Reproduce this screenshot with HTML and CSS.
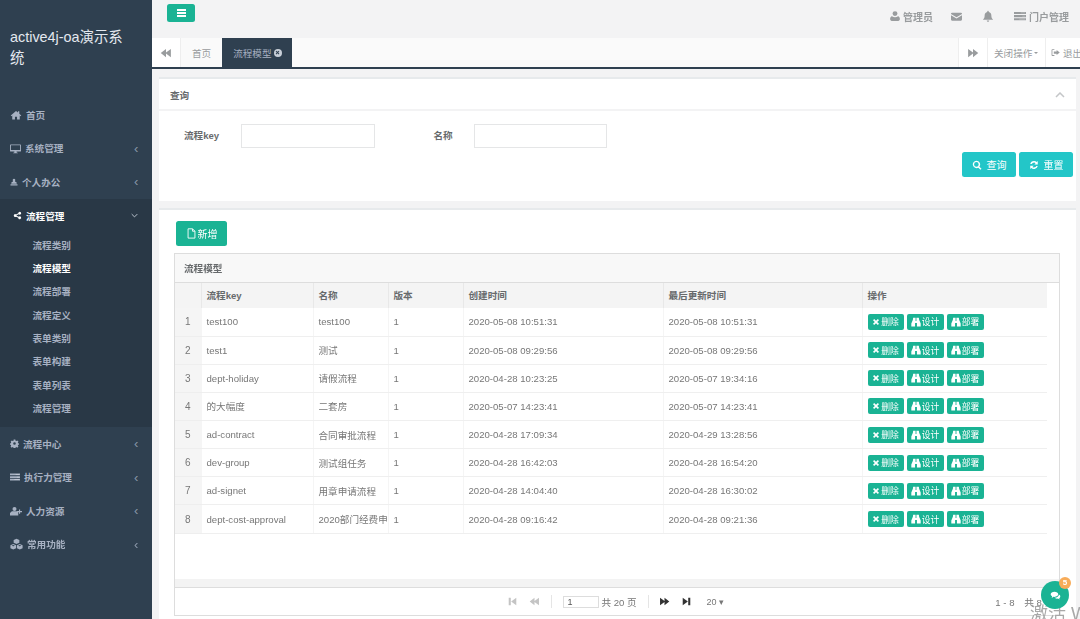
FILE: index.html
```html
<!DOCTYPE html>
<html lang="zh-CN">
<head>
<meta charset="utf-8">
<title>active4j-oa演示系统</title>
<link rel="stylesheet" href="styles.css">
</head>
<body>
<svg class="defs" width="0" height="0" aria-hidden="true">
  <symbol id="i-home" viewBox="0 0 16 16"><path d="M8 2.500 1 8.600l.8.900L3 8.500V14h3.600v-3.600h2.800V14H13V8.500l1.200 1 .8-.9-2.600-2.300V3h-1.800v1.700z"/></symbol>
  <symbol id="i-desktop" viewBox="0 0 16 16"><path fill-rule="evenodd" d="M1 2h14a1 1 0 0 1 1 1v8.500a1 1 0 0 1-1 1H9.500l.5 1.500h1.500v1H4.500v-1H6l.5-1.500H1a1 1 0 0 1-1-1V3a1 1 0 0 1 1-1zm.3 1.300v7h13.400v-7z"/></symbol>
  <symbol id="i-users" viewBox="0 0 16 16"><path d="M8 1.500a2.600 2.600 0 0 1 2 4.300v1.400l3 1.500.5 3H2.500l.5-3 3-1.500V5.800a2.600 2.600 0 0 1 2-4.300zM1 12.500h14V15H1z"/></symbol>
  <symbol id="i-share" viewBox="0 0 16 16"><path d="M12 1.500a2.500 2.500 0 1 1-1.800 4.200L6.400 7.400a2.500 2.500 0 0 1 0 1.200l3.800 1.700a2.500 2.500 0 1 1-.7 1.500L5.400 10a2.500 2.500 0 1 1 0-4l4.100-1.800A2.500 2.500 0 0 1 12 1.500z"/></symbol>
  <symbol id="i-gear" viewBox="0 0 16 16"><path fill-rule="evenodd" d="M6.500 1h3l.4 2 1.300.6 1.800-1.100 2 2-1.100 1.800.6 1.300 2 .4v2l-2 .4-.6 1.300 1.100 1.800-2 2-1.800-1.100-1.300.6-.4 2h-3l-.4-2-1.300-.6-1.800 1.100-2-2 1.100-1.800-.6-1.300-2-.4v-2l2-.4.6-1.300L1.200 4.500l2-2 1.800 1.100 1.300-.6zM8 5.700a2.300 2.300 0 1 0 0 4.600 2.300 2.300 0 0 0 0-4.600z"/></symbol>
  <symbol id="i-tasks" viewBox="0 0 16 16"><path d="M0 2.500h16v2.800H0zM0 6.700h16v2.800H0zM0 10.900h16v2.800H0z"/><path fill="#fff" fill-opacity=".35" d="M9 3.300h6v1.100H9zM11 7.500h4v1.100h-4zM7 11.700h8v1.100H7z"/></symbol>
  <symbol id="i-useradd" viewBox="0 0 16 16"><path d="M6 2.500a2.700 2.700 0 1 1 0 5.400 2.700 2.700 0 0 1 0-5.400zM2.500 8.300h7l1.500 1.700V14H0v-3.500zM12 6h1.500v2H16v1.500h-2.500v2H12v-2H9.500V8H12z"/></symbol>
  <symbol id="i-cubes" viewBox="0 0 16 16"><path fill-rule="evenodd" d="M8 1l3.500 1.500v3.300L8 7.300 4.500 5.800V2.500zM4 7.300l3.500 1.500v3.700L4 14 .5 12.500V8.800zm0 1.300L2 9.400l2 .9 2-.9zM12 7.300l3.500 1.500v3.700L12 14l-3.500-1.500V8.800zm0 1.300l-2 .8 2 .9 2-.9z"/></symbol>
  <symbol id="i-user" viewBox="0 0 16 16"><path d="M8 1.500a3.300 3.300 0 1 1 0 6.600 3.300 3.300 0 0 1 0-6.600zM4 8.200c1 .9 2.500 1.300 4 1.300s3-.4 4-1.300c1.600.3 2.500 1.800 2.500 3.800 0 1.400-.8 2.500-2.200 2.500H3.700C2.300 14.500 1.500 13.400 1.500 12c0-2 .9-3.500 2.500-3.800z"/></symbol>
  <symbol id="i-mail" viewBox="0 0 16 16"><path d="M1.500 2.500h13A1.500 1.500 0 0 1 16 4v.4L8 9.200 0 4.400V4a1.500 1.500 0 0 1 1.500-1.500zM0 6l8 4.800L16 6v6.500a1.500 1.500 0 0 1-1.500 1.500h-13A1.500 1.500 0 0 1 0 12.500z"/></symbol>
  <symbol id="i-bell" viewBox="0 0 16 16"><path d="M8 1a1 1 0 0 1 1 1v.6c2.400.5 3.500 2.400 3.500 4.900 0 2.500.8 3.700 2 4.900v.6h-13v-.6c1.200-1.200 2-2.400 2-4.900 0-2.500 1.100-4.400 3.500-4.900V2a1 1 0 0 1 1-1zM6.300 14h3.400a1.700 1.700 0 0 1-3.400 0z"/></symbol>
  <symbol id="i-back" viewBox="0 0 16 16"><path d="M8 2.500v4.700L14.500 2.500v11L8 8.800v4.700L1 8z"/></symbol>
  <symbol id="i-fwd" viewBox="0 0 16 16"><path d="M8 2.500v4.700L1.500 2.500v11L8 8.800v4.700L15 8z"/></symbol>
  <symbol id="i-first" viewBox="0 0 16 16"><path d="M2.500 2.500h3v11h-3zM13.500 2.500v11L6 8z"/></symbol>
  <symbol id="i-last" viewBox="0 0 16 16"><path d="M13.500 2.500h-3v11h3zM2.500 2.500v11L10 8z"/></symbol>
  <symbol id="i-signout" viewBox="0 0 16 16"><path d="M1 3.500A1.500 1.500 0 0 1 2.500 2H6v1.500H2.500v9H6V14H2.500A1.500 1.500 0 0 1 1 12.500zM10 3.500 15.500 8 10 12.500V10H5V6h5z"/></symbol>
  <symbol id="i-search" viewBox="0 0 16 16"><path fill-rule="evenodd" d="M7 1a6 6 0 0 1 4.800 9.600l3.400 3.400-1.700 1.700-3.400-3.400A6 6 0 1 1 7 1zm0 2.300a3.700 3.700 0 1 0 0 7.400 3.700 3.700 0 0 0 0-7.400z"/></symbol>
  <symbol id="i-refresh" viewBox="0 0 16 16"><path d="M8 1.500c1.700 0 3.200.7 4.300 1.700L14 1.500V7H8.500l2-2A4 4 0 0 0 4.300 6.500H2A6.300 6.300 0 0 1 8 1.500zM2 9h5.500l-2 2a4 4 0 0 0 6.200-1.500H14A6.300 6.300 0 0 1 3.700 12.800L2 14.500z"/></symbol>
  <symbol id="i-file" viewBox="0 0 16 16"><path fill="none" stroke="currentColor" stroke-width="1.300" d="M3 1.200h6.500L13 4.700v10H3zM9.500 1.200v3.500H13"/></symbol>
  <symbol id="i-times" viewBox="0 0 16 16"><path d="M4.300 2 8 5.700 11.700 2 14 4.300 10.300 8l3.700 3.700-2.300 2.300L8 10.300 4.300 14 2 11.700 5.700 8 2 4.300z"/></symbol>
  <symbol id="i-binoc" viewBox="0 0 16 16"><path d="M3.500 1h3.800v5.500h1.400V1h3.800l.5 3.500 2.500 6V15H9.500V9.500h-3V15H.5v-4.500l2.500-6z"/></symbol>
  <symbol id="i-comments" viewBox="0 0 16 16"><path d="M6.500 2.500c3 0 5.500 1.700 5.500 3.800S9.500 10 6.500 10c-.5 0-1 0-1.500-.1L2.500 11.500l.6-2.300C1.800 8.500 1 7.500 1 6.300c0-2.100 2.500-3.800 5.500-3.800z"/><path d="M13 6.500c1.300.7 2 1.700 2 2.800 0 1-.6 1.900-1.600 2.600l.5 2-2.300-1.400c-1.700.3-3.600-.2-4.700-1.400 3.300 0 6-1.800 6.100-4.600z"/></symbol>
</svg>

<div class="app">
  <aside class="sidebar">
    <div class="logo">active4j-oa演示系统</div>
    <nav class="nav">
      <a class="nav-item"><svg class="ic w12"><use href="#i-home"/></svg><span>首页</span></a>
      <a class="nav-item"><svg class="ic w11"><use href="#i-desktop"/></svg><span>系统管理</span><i class="chev">‹</i></a>
      <a class="nav-item"><svg class="ic w8"><use href="#i-users"/></svg><span>个人办公</span><i class="chev">‹</i></a>
      <div class="nav-group">
        <a class="nav-item open"><svg class="ic w9"><use href="#i-share"/></svg><span>流程管理</span><svg class="chev-down" viewBox="0 0 10 6"><path d="M1 1l4 4 4-4" fill="none" stroke="currentColor" stroke-width="1.300"/></svg></a>
        <ul class="sub">
          <li>流程类别</li>
          <li class="cur">流程模型</li>
          <li>流程部署</li>
          <li>流程定义</li>
          <li>表单类别</li>
          <li>表单构建</li>
          <li>表单列表</li>
          <li>流程管理</li>
        </ul>
      </div>
      <a class="nav-item"><svg class="ic w9"><use href="#i-gear"/></svg><span>流程中心</span><i class="chev">‹</i></a>
      <a class="nav-item"><svg class="ic w10"><use href="#i-tasks"/></svg><span>执行力管理</span><i class="chev">‹</i></a>
      <a class="nav-item"><svg class="ic w12"><use href="#i-useradd"/></svg><span>人力资源</span><i class="chev">‹</i></a>
      <a class="nav-item"><svg class="ic w13"><use href="#i-cubes"/></svg><span>常用功能</span><i class="chev">‹</i></a>
    </nav>
  </aside>

  <main class="main">
    <header class="topbar">
      <button class="burger" aria-label="菜单"><b></b><b></b><b></b></button>
      <div class="top-right">
        <span class="top-link"><svg class="ic w12"><use href="#i-user"/></svg>管理员</span>
        <span class="top-link"><svg class="ic w11"><use href="#i-mail"/></svg></span>
        <span class="top-link"><svg class="ic w12"><use href="#i-bell"/></svg></span>
        <span class="top-link portal"><svg class="ic w12"><use href="#i-tasks"/></svg>门户管理</span>
      </div>
    </header>

    <div class="tabs">
      <button class="tab-arrow"><svg class="ic"><use href="#i-back"/></svg></button>
      <span class="tab">首页</span>
      <span class="tab active">流程模型<em class="tab-x"><svg viewBox="0 0 16 16"><use href="#i-times"/></svg></em></span>
      <div class="tabs-fill"></div>
      <button class="tab-arrow fwd"><svg class="ic"><use href="#i-fwd"/></svg></button>
      <span class="tab-act close-ops">关闭操作<i class="caret"></i></span>
      <span class="tab-act logout"><svg class="ic"><use href="#i-signout"/></svg>退出</span>
    </div>

    <div class="content">
      <section class="panel search">
        <div class="panel-head">
          <h5>查询</h5>
          <svg class="collapse" viewBox="0 0 10 6"><path d="M1 5l4-4 4 4" fill="none" stroke="currentColor" stroke-width="1.500"/></svg>
        </div>
        <form class="search-body">
          <div class="fields">
            <label class="lbl key">流程key</label><input class="inp" type="text">
            <label class="lbl name">名称</label><input class="inp" type="text">
          </div>
          <div class="search-actions">
            <button type="button" class="btn-info"><svg class="ic"><use href="#i-search"/></svg>查询</button>
            <button type="button" class="btn-info"><svg class="ic"><use href="#i-refresh"/></svg>重置</button>
          </div>
        </form>
      </section>

      <section class="panel list">
        <button class="btn-add"><svg class="ic"><use href="#i-file"/></svg>新增</button>
        <div class="grid">
          <div class="grid-title">流程模型</div>
          <div class="grid-view">
            <table class="tbl">
              <colgroup><col class="c0"><col class="c1"><col class="c2"><col class="c3"><col class="c4"><col class="c5"><col class="c6"></colgroup>
              <thead>
                <tr><th></th><th>流程key</th><th>名称</th><th>版本</th><th>创建时间</th><th>最后更新时间</th><th>操作</th></tr>
              </thead>
              <tbody>
                <tr><td class="num">1</td><td>test100</td><td>test100</td><td>1</td><td>2020-05-08 10:51:31</td><td>2020-05-08 10:51:31</td><td class="ops"><a class="op"><svg><use href="#i-times"/></svg>删除</a><a class="op"><svg><use href="#i-binoc"/></svg>设计</a><a class="op"><svg><use href="#i-binoc"/></svg>部署</a></td></tr>
                <tr><td class="num">2</td><td>test1</td><td>测试</td><td>1</td><td>2020-05-08 09:29:56</td><td>2020-05-08 09:29:56</td><td class="ops"><a class="op"><svg><use href="#i-times"/></svg>删除</a><a class="op"><svg><use href="#i-binoc"/></svg>设计</a><a class="op"><svg><use href="#i-binoc"/></svg>部署</a></td></tr>
                <tr><td class="num">3</td><td>dept-holiday</td><td>请假流程</td><td>1</td><td>2020-04-28 10:23:25</td><td>2020-05-07 19:34:16</td><td class="ops"><a class="op"><svg><use href="#i-times"/></svg>删除</a><a class="op"><svg><use href="#i-binoc"/></svg>设计</a><a class="op"><svg><use href="#i-binoc"/></svg>部署</a></td></tr>
                <tr><td class="num">4</td><td>的大幅度</td><td>二套房</td><td>1</td><td>2020-05-07 14:23:41</td><td>2020-05-07 14:23:41</td><td class="ops"><a class="op"><svg><use href="#i-times"/></svg>删除</a><a class="op"><svg><use href="#i-binoc"/></svg>设计</a><a class="op"><svg><use href="#i-binoc"/></svg>部署</a></td></tr>
                <tr><td class="num">5</td><td>ad-contract</td><td>合同审批流程</td><td>1</td><td>2020-04-28 17:09:34</td><td>2020-04-29 13:28:56</td><td class="ops"><a class="op"><svg><use href="#i-times"/></svg>删除</a><a class="op"><svg><use href="#i-binoc"/></svg>设计</a><a class="op"><svg><use href="#i-binoc"/></svg>部署</a></td></tr>
                <tr><td class="num">6</td><td>dev-group</td><td>测试组任务</td><td>1</td><td>2020-04-28 16:42:03</td><td>2020-04-28 16:54:20</td><td class="ops"><a class="op"><svg><use href="#i-times"/></svg>删除</a><a class="op"><svg><use href="#i-binoc"/></svg>设计</a><a class="op"><svg><use href="#i-binoc"/></svg>部署</a></td></tr>
                <tr><td class="num">7</td><td>ad-signet</td><td>用章申请流程</td><td>1</td><td>2020-04-28 14:04:40</td><td>2020-04-28 16:30:02</td><td class="ops"><a class="op"><svg><use href="#i-times"/></svg>删除</a><a class="op"><svg><use href="#i-binoc"/></svg>设计</a><a class="op"><svg><use href="#i-binoc"/></svg>部署</a></td></tr>
                <tr><td class="num">8</td><td>dept-cost-approval</td><td>2020部门经费申</td><td>1</td><td>2020-04-28 09:16:42</td><td>2020-04-28 09:21:36</td><td class="ops"><a class="op"><svg><use href="#i-times"/></svg>删除</a><a class="op"><svg><use href="#i-binoc"/></svg>设计</a><a class="op"><svg><use href="#i-binoc"/></svg>部署</a></td></tr>
              </tbody>
            </table>
          </div>
          <div class="hscroll"></div>
          <div class="pager">
            <div class="pg-center">
              <svg class="pg dim"><use href="#i-first"/></svg>
              <svg class="pg dim"><use href="#i-back"/></svg>
              <i class="sep"></i>
              <input class="pg-input" type="text" value="1">
              <span>共 20 页</span>
              <i class="sep after-total"></i>
              <svg class="pg"><use href="#i-fwd"/></svg>
              <svg class="pg"><use href="#i-last"/></svg>
              <span class="pg-size">20 ▾</span>
            </div>
            <span class="pg-info">1 - 8　共 8 条</span>
          </div>
        </div>
      </section>
    </div>
  </main>
</div>

<div class="watermark">激活 Windows</div>
<div class="chat"><svg><use href="#i-comments"/></svg><span class="badge">5</span></div>
</body>
</html>
```

FILE: styles.css
```css
* { box-sizing: border-box; }
html, body { margin: 0; height: 619px; overflow: hidden; }
body {
  font-family: "Liberation Sans", "Noto Sans CJK SC", sans-serif;
  font-size: 9.6px;
  color: #676a6c;
  background: #f3f3f4;
  position: relative;
  width: 1080px;
  filter: blur(.3px);
}
.defs { position: absolute; }
svg { fill: currentColor; }
.ic { width: 10px; height: 10px; flex: none; }
.ic.w8 { width: 8px; height: 8px; }
.ic.w9 { width: 9px; height: 9px; }
.ic.w10 { width: 10px; height: 10px; }
.ic.w11 { width: 11px; height: 11px; }
.ic.w12 { width: 12px; height: 12px; }
.ic.w13 { width: 13px; height: 13px; }

.app { display: flex; height: 619px; }

/* sidebar */
.sidebar { width: 152px; flex: none; background: #2f4050; color: #a7b1c2; }
.logo {
  height: 98px;
  padding: 27px 24px 0 10px;
  font-size: 14.4px;
  line-height: 21px;
  color: #e4e8ef;
}
.nav { display: flex; flex-direction: column; }
.nav-item {
  display: flex;
  align-items: center;
  height: 33.6px;
  padding: 0 12px 0 10px;
  font-weight: 700;
  gap: 4px;
}
.nav-item span { flex: 1; }
.chev { font-style: normal; font-weight: 400; font-size: 13px; line-height: 1; width: 6px; color: #8a96a8; }
.chev-down { width: 7px; height: 5px; color: #c8cfdb; margin-right: 2px; }
.nav-group { background: #293846; padding-bottom: 6.5px; }
.nav-item.open { color: #fff; padding-left: 13px; }
.sub { list-style: none; margin: 0; padding: 1.5px 0 0 32.5px; font-weight: 700; }
.sub li { height: 23.3px; line-height: 23.3px; }
.sub li.cur { color: #fff; }

/* main */
.main { flex: 1; min-width: 0; display: flex; flex-direction: column; overflow: hidden; }
.topbar {
  height: 38px;
  flex: none;
  display: flex;
  align-items: flex-start;
  justify-content: space-between;
  padding: 4px 11px 0 15px;
}
.burger {
  width: 28px;
  height: 18px;
  padding: 0;
  background: #1ab394;
  border: 0;
  border-radius: 2.5px;
  display: flex;
  flex-direction: column;
  align-items: center;
  justify-content: center;
  gap: 1.5px;
}
.burger b { display: block; width: 9px; height: 1.5px; background: #fff; }
.top-right { display: flex; align-items: center; height: 24px; color: #999c9e; font-weight: 700; font-size: 10px; }
.top-link { display: flex; align-items: center; gap: 2px; margin-right: 20px; }
.top-link:first-child { margin-right: 18px; }
.top-link.portal { margin: 0; gap: 3px; }

.tabs {
  height: 31px;
  flex: none;
  display: flex;
  background: #fff;
  border-bottom: 2px solid #2f4050;
  color: #999c9e;
}
.tab-arrow {
  width: 28px;
  padding: 0;
  background: #fff;
  border: 0;
  color: #999c9e;
  display: flex;
  align-items: center;
  justify-content: center;
}
.tab-arrow .ic { width: 12px; height: 12px; }
.tab {
  display: flex;
  align-items: center;
  padding: 0 11px;
  background: #fafafa;
  border-left: 1px solid #eee;
  white-space: nowrap;
}
.tab.active { background: #2f4050; color: #a7b1c2; border-left: 0; gap: 2px; width: 70px; padding-right: 0; }
.tab-x { width: 8px; height: 8px; flex: none; border-radius: 50%; background: #c8cfd8; display: flex; color: #2f4050; padding: 1.5px; }
.tab-x svg { width: 100%; height: 100%; }
.tabs-fill { flex: 1; background: #fafafa; }
.tab-arrow.fwd { border-left: 1px solid #eee; width: 29px; }
.tab-act {
  display: flex;
  align-items: center;
  border-left: 1px solid #eee;
  background: #fff;
  white-space: nowrap;
}
.close-ops { width: 58px; padding-left: 6px; gap: 2px; }
.caret { width: 0; height: 0; border: 2.5px solid transparent; border-top-color: #999c9e; border-bottom: 0; }
.logout { width: 35px; padding-left: 5px; gap: 3px; overflow: hidden; flex: none; }
.logout .ic { width: 9px; height: 9px; }

.content { flex: 1; padding: 8px 4px 0 7px; display: flex; flex-direction: column; gap: 7px; min-height: 0; }
.panel { background: #fff; border-top: 2px solid #e7eaec; }

.search { height: 124px; flex: none; display: flex; flex-direction: column; }
.panel-head {
  height: 32px;
  flex: none;
  display: flex;
  align-items: center;
  justify-content: space-between;
  padding: 1px 11px 0;
  border-bottom: 2px solid #f3f3f4;
}
.panel-head h5 { margin: 0; font-size: 9.6px; font-weight: 700; color: #676a6c; }
.collapse { width: 10px; height: 6px; color: #c4c6c8; }
.search-body { flex: 1; padding: 13px 3px 0 25px; display: flex; flex-direction: column; }
.fields { display: flex; align-items: center; height: 24px; }
.lbl { font-weight: 700; padding-bottom: 2px; }
.lbl.key { width: 57px; }
.lbl.name { width: 40px; margin-left: 59px; }
.inp { width: 133.5px; height: 24px; border: 1px solid #e5e6e7; background: #fff; padding: 0 6px; }
.search-actions { display: flex; justify-content: flex-end; gap: 3px; margin-top: 4px; }
.btn-info {
  width: 54px;
  height: 25px;
  background: #23c6c8;
  color: #fff;
  border: 0;
  border-radius: 2.5px;
  padding: 0;
  font: inherit;
  font-size: 10px;
  display: flex;
  align-items: center;
  justify-content: center;
  gap: 5px;
}

.list { flex: 1; min-height: 0; padding: 11px 16px 0 15px; display: flex; flex-direction: column; align-items: flex-start; }
.btn-add {
  margin-left: 2px;
  width: 51px;
  height: 25px;
  background: #1ab394;
  color: #fff;
  border: 0;
  border-radius: 2.5px;
  padding: 0;
  font: inherit;
  font-size: 10px;
  display: flex;
  align-items: center;
  justify-content: center;
  gap: 1px;
}
.btn-add .ic { width: 11px; height: 11px; }

.grid {
  margin-top: 7px;
  width: 886px;
  height: 363px;
  border: 1px solid #ddd;
  display: flex;
  flex-direction: column;
  flex: none;
}
.grid-title {
  height: 29px;
  flex: none;
  background: #f8f8f8;
  border-bottom: 1px solid #ddd;
  padding-left: 9px;
  display: flex;
  align-items: center;
  font-weight: 700;
}
.grid-view { flex: 1; min-height: 0; overflow: hidden; }
.tbl { table-layout: fixed; width: 872px; border-collapse: collapse; }
.c0 { width: 26px; } .c1 { width: 112px; } .c2 { width: 75px; } .c3 { width: 75px; }
.c4 { width: 200px; } .c5 { width: 199px; } .c6 { width: 185px; }
.tbl th {
  height: 25px;
  background: #f4f4f4;
  border-left: 1px solid #e8e8e8;
  text-align: left;
  padding: 0 5px 2px;
  font-weight: 700;
}
.tbl th:first-child { border-left: 0; }
.tbl td {
  height: 28.15px;
  padding: 0 5px;
  border-bottom: 1px solid #efefef;
  border-left: 1px solid #f5f5f5;
  white-space: nowrap;
  overflow: hidden;
  color: #777;
}
.tbl td.num { background: #f5f5f5; border-left: 0; border-bottom-color: #eee; text-align: center; padding: 0; font-size: 10px; }
.ops { font-size: 0; }
.op {
  display: inline-flex;
  vertical-align: middle;
  align-items: center;
  justify-content: center;
  gap: 1px;
  height: 16px;
  padding: 0;
  margin-right: 3px;
  width: 36px;
  background: #1ab394;
  border-radius: 2px;
  color: #fff;
  font-size: 8.8px;
}
.op + .op { width: 37px; }
.op svg { width: 8px; height: 8px; }
.op + .op svg { width: 10px; height: 10px; }

.hscroll { height: 9px; flex: none; background: #f3f3f3; border-bottom: 1px solid #ddd; }
.pager { height: 27px; flex: none; background: #fff; position: relative; display: flex; align-items: center; justify-content: center; color: #777; }
.pg-center { display: flex; align-items: center; margin-left: -8px; }
.pg { width: 11px; height: 11px; margin: 0 5.5px; color: #333; }
.pg.dim { color: #c4c4c4; }
.sep { width: 1px; height: 13px; background: #e5e5e5; margin: 0 5.5px; }
.sep.after-total { margin-left: 11px; margin-right: 5px; }
.pg-input { width: 36px; height: 12px; border: 1px solid #ddd; padding: 0 3px; font-size: 9px; margin: 0 2px 0 5.5px; color: #555; }
.pg-size { margin-left: 9px; font-size: 9px; }
.pg-info { position: absolute; right: 5px; white-space: nowrap; }

.watermark { position: absolute; left: 1030px; top: 603px; font-size: 18px; line-height: 22px; color: #a8a8a8; white-space: nowrap; }
.chat {
  position: absolute;
  left: 1041px;
  top: 581px;
  width: 28px;
  height: 28px;
  border-radius: 50%;
  background: #1ab394;
  color: #fff;
  display: flex;
  align-items: center;
  justify-content: center;
}
.chat > svg { width: 11px; height: 11px; }
.badge {
  position: absolute;
  right: -2px;
  top: -4px;
  width: 12px;
  height: 12px;
  border-radius: 50%;
  background: #f8ac59;
  color: #fff;
  font-size: 8px;
  font-weight: 700;
  text-align: center;
  line-height: 12px;
}
```
